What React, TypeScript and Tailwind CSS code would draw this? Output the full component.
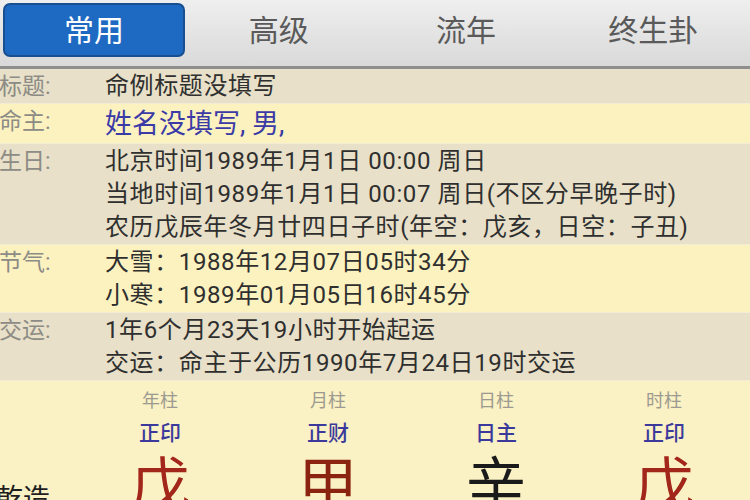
import React from 'react';

const font = { fontFamily: 'Roboto, "Noto Sans CJK SC", sans-serif' };

const tabs = ['常用', '高级', '流年', '终生卦'];

const rows: { label: string; lines: string[]; yellow?: boolean; blue?: boolean }[] = [
  { label: '标题:', lines: ['命例标题没填写'] },
  { label: '命主:', lines: ['姓名没填写, 男,'], yellow: true, blue: true },
  {
    label: '生日:',
    lines: [
      '北京时间1989年1月1日 00:00 周日',
      '当地时间1989年1月1日 00:07 周日(不区分早晚子时)',
      '农历戊辰年冬月廿四日子时(年空：戊亥，日空：子丑)',
    ],
  },
  { label: '节气:', lines: ['大雪：1988年12月07日05时34分', '小寒：1989年01月05日16时45分'], yellow: true },
  { label: '交运:', lines: ['1年6个月23天19小时开始起运', '交运：命主于公历1990年7月24日19时交运'] },
];

const pillars = [
  { name: '年柱', god: '正印', stem: '戊', color: 'text-[#a3261a]' },
  { name: '月柱', god: '正财', stem: '甲', color: 'text-[#8a2410]' },
  { name: '日柱', god: '日主', stem: '辛', color: 'text-[#1a1a1a]' },
  { name: '时柱', god: '正印', stem: '戊', color: 'text-[#a3261a]' },
];

export default function App() {
  return (
    <div className="w-[750px] h-[500px] overflow-hidden bg-[#faf1c4]" style={font}>
      {/* Tab bar */}
      <div className="h-[69px] bg-gradient-to-b from-[#efefef] to-[#d9d9d9] border-b-[3px] border-[#8e8e8e] flex pt-[3px] pl-[3px] pr-[3px] pb-[9px]">
        {tabs.map((t, i) => (
          <div
            key={t}
            className={
              i === 0
                ? 'w-[182px] h-[54px] rounded-[7px] bg-[#1e69c2] border-2 border-[#174f90] flex items-center justify-center text-white text-[30px]'
                : 'flex-1 flex items-center justify-center text-[#5a5a5a] text-[30px]'
            }
          >
            {t}
          </div>
        ))}
      </div>

      {/* Info rows */}
      {rows.map((r) => (
        <div
          key={r.label}
          className={`flex pt-[1px] ${r.yellow ? 'bg-[#fbf2c0]' : 'bg-[#e8e0c8]'} border-b border-[#f3ecd6]`}
        >
          <div className="w-[107px] shrink-0 -ml-[2px] pl-[1px] text-[23px] leading-[33px] text-[#8d8b85]">{r.label}</div>
          <div>
            {r.lines.map((l) => (
              <div
                key={l}
                className={
                  r.blue
                    ? 'text-[27px] leading-[38px] text-[#3b3aa6]'
                    : 'text-[24px] leading-[33px] tracking-[0.6px] text-[#2f2f2f]'
                }
              >
                {l}
              </div>
            ))}
          </div>
        </div>
      ))}

      {/* Pillars */}
      <div className="flex">
        <div className="w-[76px] shrink-0 flex items-end pt-[96px]">
          <span className="text-[27px] text-[#1e1e1e] -ml-[4px]">乾造</span>
        </div>
        {pillars.map((p) => (
          <div key={p.name} className="w-[168px] flex flex-col items-center">
            <div className="text-[18px] leading-[24px] mt-[8px] text-[#9c9a90]">{p.name}</div>
            <div className="text-[21px] leading-[28px] mt-[6px] font-medium text-[#3b3a9c]">{p.god}</div>
            <div className={`text-[60px] leading-[64px] mt-[8px] ${p.color}`}>{p.stem}</div>
          </div>
        ))}
      </div>
    </div>
  );
}
